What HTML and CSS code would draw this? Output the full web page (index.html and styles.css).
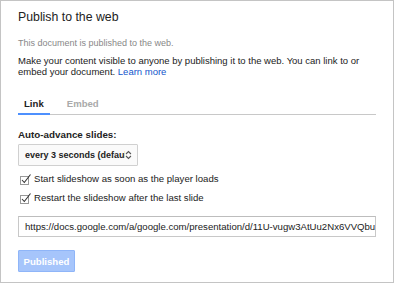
FILE: index.html
```html
<!DOCTYPE html>
<html lang="en">
<head>
    <meta charset="UTF-8">
    <title>Publish to the web</title>
    <link rel="stylesheet" href="styles.css">
</head>
<body>
    <div class="dialog">
        <div class="title">Publish to the web</div>
        <div class="status">This document is published to the web.</div>
        <div class="intro">
            Make your content visible to anyone by publishing it to the web. You can link to or
            embed your document. <a href="#">Learn more</a>
        </div>

        <div class="tabs">
            <div class="tab active">Link</div>
            <div class="tab">Embed</div>
        </div>

        <div class="label">Auto-advance slides:</div>
        <div class="select">
            <span class="select-text">every 3 seconds (default)</span>
            <svg class="select-arrows" width="7" height="10" viewBox="0 0 7 10">
                <polyline points="1,4 3.5,1.5 6,4" fill="none" stroke="#555" stroke-width="1.1"/>
                <polyline points="1,6 3.5,8.5 6,6" fill="none" stroke="#555" stroke-width="1.1"/>
            </svg>
        </div>

        <!-- checkboxes -->
        <label class="check">
            <svg class="check-box" width="12" height="12" viewBox="0 0 12 12">
                <rect x="0.5" y="3.5" width="8" height="8" fill="#fff" stroke="#999"/>
                <polyline points="2,7 4.3,9.5 10.5,1.5" fill="none" stroke="#333" stroke-width="1.1"/>
            </svg>
            Start slideshow as soon as the player loads
        </label>
        <label class="check">
            <svg class="check-box" width="12" height="12" viewBox="0 0 12 12">
                <rect x="0.5" y="3.5" width="8" height="8" fill="#fff" stroke="#999"/>
                <polyline points="2,7 4.3,9.5 10.5,1.5" fill="none" stroke="#333" stroke-width="1.1"/>
            </svg>
            Restart the slideshow after the last slide
        </label>

        <div class="url">https://docs.google.com/a/google.com/presentation/d/11U-vugw3AtUu2Nx6VVQbuDkY7cR1dRq/pub</div>

        <button class="published" disabled>Published</button>
    </div>
</body>
</html>
```

FILE: styles.css
```css
* {
    box-sizing: border-box;
}
body {
    margin: 0;
    background-color: #ffffff;
    font-family: 'Liberation Sans', Arial, sans-serif;
    color: #222;
}
.dialog {
    width: 394px;
    height: 283px;
    border: 1px solid #c4c4c4;
    padding: 9px 17px 0 17px;
    overflow: hidden;
}
.title {
    font-size: 12.3px;
    line-height: 14px;
    color: #222;
}
.status {
    margin-top: 13px;
    font-size: 9px;
    line-height: 12px;
    color: #888;
}
.intro {
    margin-top: 6px;
    font-size: 9.5px;
    line-height: 11px;
    color: #222;
}
.intro a {
    color: #1155cc;
    text-decoration: none;
}
/* tabs */
.tabs {
    display: flex;
    gap: 11px;
    margin-top: 21px;
    border-bottom: 1px solid #c8c8c8;
}
.tab {
    padding: 0 6px 3px;
    font-size: 9.6px;
    font-weight: bold;
    line-height: 12px;
    color: #aaa;
}
.tab.active {
    color: #222;
    border-bottom: 2px solid #4d90fe;
    margin-bottom: -1px;
}
.label {
    margin-top: 14px;
    font-size: 9.8px;
    font-weight: bold;
    line-height: 12px;
}
.select {
    display: flex;
    align-items: center;
    width: 120px;
    height: 22px;
    margin-top: 3px;
    padding: 0 5px 0 6px;
    border: 1px solid #d0d0d0;
    border-radius: 1px;
    background-color: #fafafa;
}
.select-text {
    width: 101px;
    overflow: hidden;
    white-space: nowrap;
    font-size: 9px;
    font-weight: bold;
}
.select-arrows {
    margin-left: auto;
}
.check {
    display: flex;
    align-items: center;
    height: 14px;
    margin-top: 6px;
    padding-left: 2px;
    font-size: 9.6px;
    line-height: 14px;
}
.check + .check {
    margin-top: 5px;
}
.check-box {
    margin-right: 2px;
}
.url {
    height: 21px;
    margin-top: 11px;
    padding: 0 6px;
    border: 1px solid #c8c8c8;
    border-top-color: #bdbdbd;
    font-size: 9.6px;
    line-height: 19px;
    white-space: nowrap;
    overflow: hidden;
}
.published {
    display: block;
    width: 57px;
    height: 22px;
    margin-top: 13px;
    padding: 0;
    border: 1px solid #8fb5f8;
    border-radius: 1px;
    background-color: #a6c5fb;
    color: #ffffff;
    font-family: 'Liberation Sans', Arial, sans-serif;
    font-size: 9.6px;
    font-weight: bold;
}
```
